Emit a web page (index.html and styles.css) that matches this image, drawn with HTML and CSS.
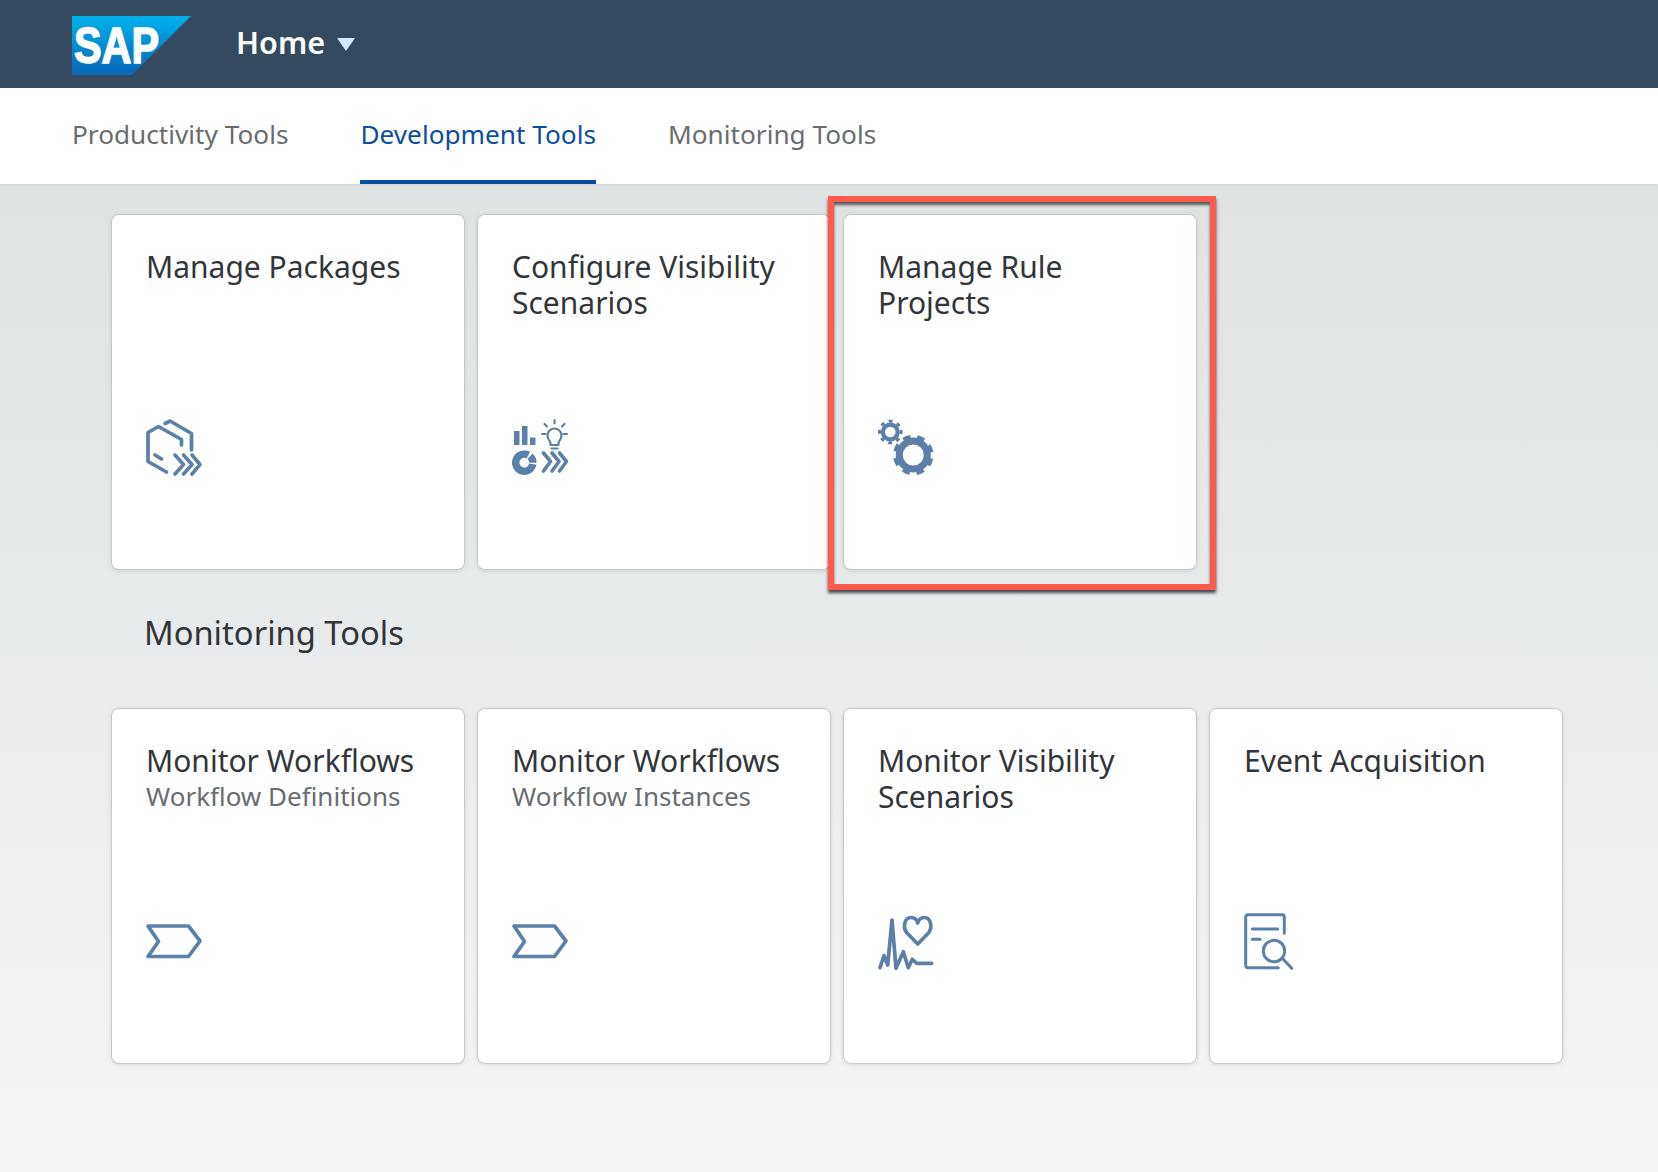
FILE: index.html
```html
<!DOCTYPE html>
<html lang="en">
<head>
  <meta charset="UTF-8">
  <title>SAP Home</title>
  <link rel="stylesheet" href="styles.css">
</head>
<body>
  <header class="shell">
    <svg class="logo" viewBox="0 0 119 59" aria-label="SAP">
      <defs>
        <linearGradient id="logo-blue" x1="0" y1="0" x2="0" y2="1">
          <stop offset="0" stop-color="#00b1eb"/>
          <stop offset="1" stop-color="#0a66b5"/>
        </linearGradient>
      </defs>
      <polygon points="0,0 119,0 60,59 0,59" fill="url(#logo-blue)"/>
      <text class="logo-text" x="2" y="47" textLength="85" lengthAdjust="spacingAndGlyphs">SAP</text>
    </svg>
    <span class="shell-title">Home</span>
    <span class="shell-caret"></span>
  </header>

  <nav class="tabs">
    <a class="tab">Productivity Tools</a>
    <a class="tab tab-active">Development Tools</a>
    <a class="tab">Monitoring Tools</a>
  </nav>

  <main class="content">
    <section class="tile-row">
      <div class="tile">
        <div class="tile-head"><div class="tile-title">Manage Packages</div></div>
        <svg class="tile-icon" viewBox="0 0 56 56">
          <path d="M20.5 52 2 41.5V12.5L12.5 6.500 35.500 19.500V25M19 3.500 24 1 45.500 13.500V30M9 35l6.500 4"/>
          <path class="thick" d="M29 35l8.500 9.500L29 54M37.500 35l8.500 9.500L37.500 54M46 35l8 9.500L46 54"/>
        </svg>
      </div>
      <div class="tile">
        <div class="tile-head"><div class="tile-title">Configure Visibility Scenarios</div></div>
        <svg class="tile-icon" viewBox="0 0 56 56">
          <path class="solid" d="M2 11h5.500v14H2zM10 6h5.500v19H10zM18 17.500h5.500V25H18z"/>
          <circle class="donut" cx="12.300" cy="42.700" r="8.600" stroke-dasharray="43 2 7.200 1.840" transform="rotate(10 12.300 42.700)"/>
          <path class="thin" d="M38.500 25v-2c0-2-3-3.500-3-7.500a7 7 0 0 1 14 0c0 4-3 5.500-3 7.500v2zM39.500 28.500h6M42.500 0v3.500M32.500 4l2.500 2.500M52.500 4 50 6.500M30 14h3.500M51.500 14H55"/>
          <path class="thick" d="M31.500 33l7 8.500-7 9.500M40 33l7 8.500-7 9.500M47.500 33l7 8.500-7 9.500"/>
        </svg>
      </div>
      <div class="tile tile-marked">
        <div class="tile-head"><div class="tile-title">Manage Rule Projects</div></div>
        <svg class="tile-icon" viewBox="0 0 56 56">
          <circle class="gear-ring" cx="12.300" cy="12" r="7.400" stroke-width="4.200"/>
          <circle class="gear-teeth" cx="12.300" cy="12" r="10.800" stroke-width="3" stroke-dasharray="3.800 4.680" transform="rotate(-10 12.300 12)"/>
          <circle class="gear-ring" cx="35.300" cy="35" r="14" stroke-width="7"/>
          <circle class="gear-teeth" cx="35.300" cy="35" r="18" stroke-width="4.500" stroke-dasharray="7.500 6.640" transform="rotate(10.500 35.300 35)"/>
        </svg>
        <div class="tile-mark"></div>
      </div>
    </section>

    <h2 class="section-title">Monitoring Tools</h2>

    <section class="tile-row tile-row-low">
      <div class="tile">
        <div class="tile-head">
          <div class="tile-title">Monitor Workflows</div>
          <div class="tile-sub">Workflow Definitions</div>
        </div>
        <svg class="tile-icon" viewBox="0 0 56 56">
          <path d="M2 13h40.500L54 28 42.500 43.500H2L12.500 28.500z"/>
        </svg>
      </div>
      <div class="tile">
        <div class="tile-head">
          <div class="tile-title">Monitor Workflows</div>
          <div class="tile-sub">Workflow Instances</div>
        </div>
        <svg class="tile-icon" viewBox="0 0 56 56">
          <path d="M2 13h40.500L54 28 42.500 43.500H2L12.500 28.500z"/>
        </svg>
      </div>
      <div class="tile">
        <div class="tile-head"><div class="tile-title">Monitor Visibility Scenarios</div></div>
        <svg class="tile-icon" viewBox="0 0 56 56">
          <path d="M2 54.700 6 42.700 9.700 52 14 7l4 48.300 7.300-16.600 5 16 4-8.400 4.400 4H53.700"/>
          <path d="M39.700 31 29 20C24 14 27 4.500 33 4.500c4 0 6 2.500 6.700 5.500.8-3 2.800-5.500 6.800-5.500 6 0 8.500 9.500 4 15.500z"/>
        </svg>
      </div>
      <div class="tile">
        <div class="tile-head"><div class="tile-title">Event Acquisition</div></div>
        <svg class="tile-icon" viewBox="0 0 56 56">
          <path class="mid" d="M34.300 54.700H4a2.300 2.300 0 0 1-2.300-2.300V4A2.300 2.300 0 0 1 4 1.700h34a2.300 2.300 0 0 1 2.300 2.300v16.300M8.300 16h25.400M8.300 26.300H16"/>
          <circle class="mid" cx="30" cy="38" r="10.700"/>
          <path class="mid" d="M38.300 45.300 47.700 55.300"/>
        </svg>
      </div>
    </section>
  </main>
</body>
</html>
```

FILE: styles.css
```css
* {
  box-sizing: border-box;
}
html, body {
  height: 100%;
}
body {
  margin: 0;
  display: flex;
  flex-direction: column;
  font-family: 'Noto Sans', sans-serif;
  color: #32363a;
  background-color: #edeff0;
}

/* top bar */
.shell {
  height: 88px;
  flex: none;
  display: flex;
  align-items: center;
  padding-left: 72px;
  background-color: #354a5f;
  color: white;
}
.logo {
  width: 119px;
  height: 59px;
  margin-top: 3px;
}
.logo-text {
  font-family: 'Liberation Sans', sans-serif;
  font-size: 50px;
  font-weight: bold;
  fill: white;
  stroke: white;
  stroke-width: 1.5px;
}
.shell-title {
  margin-left: 45px;
  margin-bottom: 5px;
  font-size: 30.5px;
  font-weight: 600;
}
.shell-caret {
  margin-left: 12px;
  border-left: 9px solid transparent;
  border-right: 9px solid transparent;
  border-top: 13px solid #d1e8ff;
}

/* tabs */
.tabs {
  height: 96px;
  flex: none;
  display: flex;
  gap: 72px;
  padding-left: 72px;
  background-color: white;
  box-shadow: 0 1px 3px rgba(0, 0, 0, 0.08);
  position: relative;
}
.tab {
  display: flex;
  align-items: center;
  height: 96px;
  font-size: 26.2px;
  color: #6a6d70;
  border-bottom: 4px solid transparent;
}
.tab-active {
  color: #0a4f9e;
  border-bottom-color: #0a4f9e;
}

/* tiles */
.content {
  flex: 1;
  padding: 30px 0 0 111px;
  background: linear-gradient(180deg, #dfe3e4 0%, #f3f4f5 100%);
}
.tile-row {
  display: grid;
  grid-template-columns: repeat(4, 354px);
  gap: 12px;
}
.section-title {
  margin: 42px 0 0 33px;
  height: 96px;
  font-size: 32.700px;
  font-weight: 400;
  line-height: 42px;
}
.tile {
  height: 356px;
  padding: 34px 34px 0;
  display: flex;
  flex-direction: column;
  justify-content: space-between;
  background-color: white;
  border: 1px solid #c6c9cb;
  border-radius: 8px;
  box-shadow: 0 1px 4px rgba(0, 0, 0, 0.1);
}
.tile-marked {
  position: relative;
}
.tile-head {
  height: 170px;
}
.tile-title {
  font-size: 30px;
  line-height: 36px;
}
.tile-sub {
  font-size: 26px;
  line-height: 35px;
  color: #6a6d70;
}
.tile-icon {
  display: block;
  width: 56px;
  height: 56px;
  margin-bottom: 93px;
  overflow: visible;
  fill: none;
  stroke: #5d80a8;
  stroke-width: 3.700;
  stroke-linecap: round;
  stroke-linejoin: round;
}
.tile-row-low .tile-icon {
  margin-bottom: 94px;
}
.tile-icon .thick {
  stroke-width: 3.600;
}
.tile-icon .thin {
  stroke-width: 2.200;
}
.tile-icon .mid {
  stroke-width: 3;
}
.tile-icon .solid {
  fill: #5d80a8;
  stroke: none;
}
.tile-icon .donut {
  stroke-width: 7.400;
  stroke-linecap: butt;
}
.tile-icon .gear-ring,
.tile-icon .gear-teeth {
  stroke-linecap: butt;
}

/* red annotation box */
.tile-mark {
  position: absolute;
  top: -19px;
  left: -16px;
  right: -20px;
  bottom: -21px;
  z-index: 2;
  border: 6px solid #fd5b4d;
  box-shadow: 0 3px 3px rgba(0, 0, 0, 0.7), inset 0 3px 3px rgba(0, 0, 0, 0.6);
}
```
